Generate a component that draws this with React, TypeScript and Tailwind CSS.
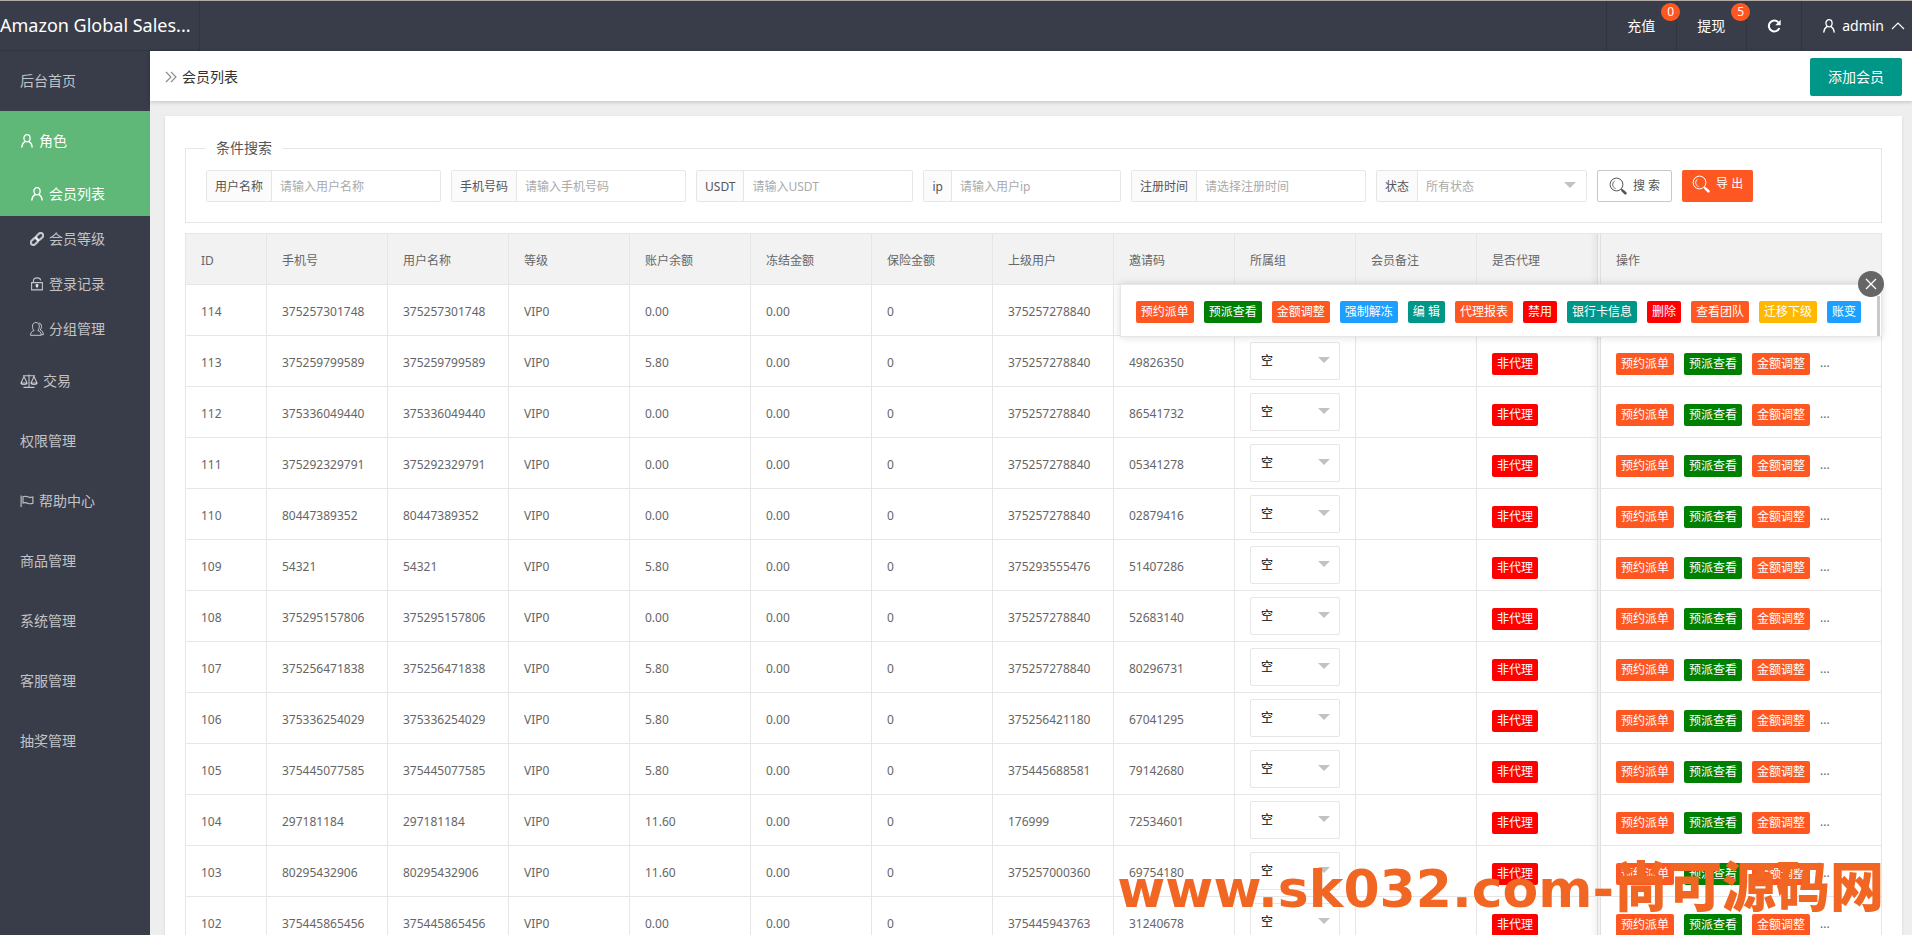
import React from "react";

const FONT = "font-['Noto_Sans','Noto_Sans_CJK_SC',sans-serif]";

function UserIcon({ className = "w-3 h-3.5" }: { className?: string }) {
  return (
    <svg viewBox="0 0 12 14" className={className} fill="none" stroke="currentColor" strokeWidth="1.3" strokeLinecap="round" aria-hidden="true">
      <ellipse cx="6" cy="4.3" rx="3.1" ry="3.6" />
      <path d="M4.2 7.4C2.2 8.6 1 10.6.8 13.1M7.8 7.4c2 1.2 3.2 3.2 3.4 5.7" />
    </svg>
  );
}

function LinkIcon() {
  return (
    <svg viewBox="0 0 14 14" className="h-3.5 w-3.5" fill="none" stroke="currentColor" strokeWidth="2.2" aria-hidden="true">
      <rect x="5.6" y="2" width="8" height="5" rx="2.5" transform="rotate(-45 9.6 4.5)" />
      <rect x=".4" y="7" width="8" height="5" rx="2.5" transform="rotate(-45 4.4 9.5)" />
    </svg>
  );
}

function LockIcon() {
  return (
    <svg viewBox="0 0 14 14" className="h-3.5 w-3.5" fill="none" stroke="currentColor" strokeWidth="1.1" aria-hidden="true">
      <path d="M1.6 5.6h10.8v7.3H1.6zM3.4 5.6V3.9C3.4 2 4.9.9 7 .9s3.6 1.1 3.6 2.6" />
      <circle cx="7" cy="8.4" r="1" fill="currentColor" />
      <path d="M7 8.4v2.8" />
    </svg>
  );
}

function GroupIcon() {
  return (
    <svg viewBox="0 0 14 14" className="h-3.5 w-3.5" fill="none" stroke="currentColor" strokeWidth="1" strokeLinejoin="round" aria-hidden="true">
      <path d="M4 8.600C2.900 7.400 2.500 5.900 2.500 4.300 2.500 2 3.800.5 5.900.5s3.400 1.500 3.400 3.800c0 1.600-.4 3.100-1.500 4.300 2.400.7 3.400 2 3.400 4.700H.6C.6 10.600 1.600 9.300 4 8.600z" />
      <path d="M8.800 1c1.800.2 2.700 1.500 2.700 3.300 0 1.400-.4 2.600-1.200 3.700 2 .8 3 2.200 3.100 4.700h-2" />
    </svg>
  );
}

function ScaleIcon() {
  return (
    <svg viewBox="0 0 18 14" className="h-3.5 w-[18px]" fill="none" stroke="currentColor" strokeWidth="1.1" strokeLinejoin="round" aria-hidden="true">
      <path d="M3 1.800h12M9 .5v12.700M3.500 13.400h11" />
      <path d="M4 2.500 1 9h6zM14 2.500 11 9h6z" />
      <path d="M1 9c.5 2 5.500 2 6 0M11 9c.5 2 5.500 2 6 0" />
    </svg>
  );
}

function FlagIcon() {
  return (
    <svg viewBox="0 0 15 14" className="h-3.5 w-3.5" fill="none" stroke="currentColor" strokeWidth="1.200" aria-hidden="true">
      <path d="M1.200 1v12.500M3.200 2.400c2.200-1 3.600-.6 5 .1s3.400.9 5.600.2v6.700c-2.200.8-4.200.5-5.600-.1s-2.800-.9-5-.1z" />
    </svg>
  );
}

function RefreshIcon() {
  return (
    <svg viewBox="0 0 14 14" className="h-3.5 w-3.5" fill="none" aria-hidden="true">
      <path d="M11.200 3.300A5.400 5.400 0 1 0 12.300 9" stroke="currentColor" strokeWidth="2" />
      <path d="M13.700.8v5.400H8.300z" fill="currentColor" />
    </svg>
  );
}

function SearchIcon() {
  return (
    <svg viewBox="0 0 18 18" className="h-[18px] w-[18px]" fill="none" stroke="currentColor" aria-hidden="true">
      <circle cx="7.500" cy="7.500" r="6.400" strokeWidth="1" />
      <path d="M6.600 11.600C3.400 10.600 2.600 6.200 5.600 4" strokeWidth=".9" />
      <path d="m12.200 12.200 1.200 1.200" strokeWidth="1.200" />
      <path d="m13.600 13.600 2.800 2.700" strokeWidth="2.600" strokeLinecap="round" />
    </svg>
  );
}

type MenuItem = { text: string; icon?: React.ReactNode; sub?: boolean; active?: boolean };

const menu: MenuItem[] = [
  { text: "后台首页" },
  { text: "角色", icon: <UserIcon className="mx-px h-3.5 w-3" />, active: true },
  { text: "会员列表", icon: <UserIcon className="mx-px h-3.5 w-3" />, sub: true, active: true },
  { text: "会员等级", icon: <LinkIcon />, sub: true },
  { text: "登录记录", icon: <LockIcon />, sub: true },
  { text: "分组管理", icon: <GroupIcon />, sub: true },
  { text: "交易", icon: <ScaleIcon /> },
  { text: "权限管理" },
  { text: "帮助中心", icon: <FlagIcon /> },
  { text: "商品管理" },
  { text: "系统管理" },
  { text: "客服管理" },
  { text: "抽奖管理" },
];

const columns = ["ID", "手机号", "用户名称", "等级", "账户余额", "冻结金额", "保险金额", "上级用户", "邀请码", "所属组", "会员备注", "是否代理"];

const rows: string[][] = [
  ["114", "375257301748", "375257301748", "VIP0", "0.00", "0.00", "0", "375257278840", ""],
  ["113", "375259799589", "375259799589", "VIP0", "5.80", "0.00", "0", "375257278840", "49826350"],
  ["112", "375336049440", "375336049440", "VIP0", "0.00", "0.00", "0", "375257278840", "86541732"],
  ["111", "375292329791", "375292329791", "VIP0", "0.00", "0.00", "0", "375257278840", "05341278"],
  ["110", "80447389352", "80447389352", "VIP0", "0.00", "0.00", "0", "375257278840", "02879416"],
  ["109", "54321", "54321", "VIP0", "5.80", "0.00", "0", "375293555476", "51407286"],
  ["108", "375295157806", "375295157806", "VIP0", "0.00", "0.00", "0", "375257278840", "52683140"],
  ["107", "375256471838", "375256471838", "VIP0", "5.80", "0.00", "0", "375257278840", "80296731"],
  ["106", "375336254029", "375336254029", "VIP0", "5.80", "0.00", "0", "375256421180", "67041295"],
  ["105", "375445077585", "375445077585", "VIP0", "5.80", "0.00", "0", "375445688581", "79142680"],
  ["104", "297181184", "297181184", "VIP0", "11.60", "0.00", "0", "176999", "72534601"],
  ["103", "80295432906", "80295432906", "VIP0", "11.60", "0.00", "0", "375257000360", "69754180"],
  ["102", "375445865456", "375445865456", "VIP0", "0.00", "0.00", "0", "375445943763", "31240678"],
];

const expandedId = "114";

const actions: [string, string][] = [
  ["预约派单", "bg-[#ff5722]"],
  ["预派查看", "bg-[#008000]"],
  ["金额调整", "bg-[#ff5722]"],
  ["强制解冻", "bg-[#1e9fff]"],
  ["编 辑", "bg-[#009688]"],
  ["代理报表", "bg-[#ff5722]"],
  ["禁用", "bg-[#ff0000]"],
  ["银行卡信息", "bg-[#009688]"],
  ["删除", "bg-[#ff0000]"],
  ["查看团队", "bg-[#ff5722]"],
  ["迁移下级", "bg-[#ffb800]"],
  ["账变", "bg-[#1e9fff]"],
];

function SmallButton({ text, color }: { text: string; color: string }) {
  return (
    <button type="button" className={`block h-[22px] shrink-0 whitespace-nowrap rounded-xs px-[5px] text-xs leading-[22px] text-white ${color}`}>
      {text}
    </button>
  );
}

function Caret() {
  return <span className="pointer-events-none absolute right-[10px] top-1/2 -mt-1 border-x-6 border-t-6 border-x-transparent border-t-[#c2c2c2]" />;
}

function Field({ id, label, placeholder }: { id: string; label: string; placeholder: string }) {
  return (
    <div className="flex h-8 rounded-xs border border-[#e6e6e6]">
      <label htmlFor={id} className="border-r border-[#e6e6e6] bg-[#fbfbfb] px-2 leading-8 text-[#555]">
        {label}
      </label>
      <input id={id} type="text" placeholder={placeholder} className="w-[168px] px-2 pt-0.5 text-[#555] outline-none placeholder:text-[#aaa]" />
    </div>
  );
}

function SearchForm() {
  return (
    <fieldset className="border border-[#e6e6e6] px-5 pb-5">
      <legend className="px-[10px] text-sm leading-5 text-[#555]">条件搜索</legend>
      <form className="flex flex-wrap gap-[10px] pt-3 text-xs">
        <Field id="username" label="用户名称" placeholder="请输入用户名称" />
        <Field id="tel" label="手机号码" placeholder="请输入手机号码" />
        <Field id="usdt" label="USDT" placeholder="请输入USDT" />
        <Field id="ip" label="ip" placeholder="请输入用户ip" />
        <Field id="regtime" label="注册时间" placeholder="请选择注册时间" />
        <div className="flex h-8 rounded-xs border border-[#e6e6e6]">
          <label htmlFor="status" className="border-r border-[#e6e6e6] bg-[#fbfbfb] px-2 leading-8 text-[#555]">
            状态
          </label>
          <div className="relative">
            <select id="status" className="h-full w-[168px] appearance-none px-2 pt-0.5 text-[#aaa] outline-none">
              <option>所有状态</option>
            </select>
            <Caret />
          </div>
        </div>
        <button type="button" className="flex h-8 items-center gap-[6px] rounded-xs border border-[#c9c9c9] bg-white px-[11px] text-[#555]">
          <SearchIcon />
          搜 索
        </button>
        <button type="button" className="flex h-8 items-center gap-[6px] rounded-xs bg-[#ff5722] px-[10px] pb-1 text-white">
          <SearchIcon />
          导 出
        </button>
      </form>
    </fieldset>
  );
}

const cell = "border-b border-r border-[#e6e6e6] px-[15px] text-left font-normal";
const pinned =
  "relative border-b border-r border-[#e6e6e6] pl-[18px] pr-[15px] text-left font-normal shadow-[inset_2px_0_#f2f2f2,inset_3px_0_#e0e0e0] before:absolute before:inset-y-0 before:-left-2 before:w-2 before:bg-linear-to-r before:from-transparent before:to-black/5";

function RowTail() {
  return (
    <>
      <td className={cell}>
        <div className="relative h-[38px] w-[90px]">
          <select aria-label="所属组" className="h-full w-full appearance-none rounded-xs border border-[#e6e6e6] bg-white px-[10px] text-black outline-none">
            <option>空</option>
          </select>
          <Caret />
        </div>
      </td>
      <td className={cell} />
      <td className={`${cell} pt-[5px]`}>
        <SmallButton text="非代理" color="bg-[#ff0000]" />
      </td>
      <td className={`${pinned} pt-[5px]`}>
        <div className="flex gap-[10px]">
          {actions.slice(0, 3).map(([t, c]) => (
            <SmallButton key={t} text={t} color={c} />
          ))}
          <span className="leading-5">...</span>
        </div>
      </td>
    </>
  );
}

function MemberTable() {
  return (
    <div className="relative mt-[10px]">
      <table className="w-full table-fixed border-separate border-spacing-0 border-l border-t border-[#e6e6e6] text-xs text-[#666]">
        <colgroup>
          <col className="w-[81px]" />
          {columns.slice(1).map((c) => (
            <col key={c} className="w-[121px]" />
          ))}
          <col />
        </colgroup>
        <thead>
          <tr className="h-[51px] bg-[#f2f2f2]">
            {columns.map((c) => (
              <th key={c} className={`${cell} pt-[3px]`}>
                {c}
              </th>
            ))}
            <th className={`${pinned} pt-[3px]`}>操作</th>
          </tr>
        </thead>
        <tbody>
          {rows.map((r) => (
            <tr key={r[0]} className="h-[51px]">
              {r.map((v, i) => (
                <td key={i} className={`${cell} pt-[3px]`}>
                  {v}
                </td>
              ))}
              {r[0] === expandedId ? <td colSpan={4} className={cell} /> : <RowTail />}
            </tr>
          ))}
        </tbody>
      </table>
      <div className="absolute right-0 top-[51px] flex h-[53px] gap-[10px] border border-[#e6e6e6] bg-white pl-[15px] pr-5 pt-4 shadow-[0_0_8px_rgba(0,0,0,0.15)]">
        {actions.map(([t, c]) => (
          <SmallButton key={t} text={t} color={c} />
        ))}
        <span className="absolute bottom-0 right-px h-10 w-[3px] bg-[#c9c9c9]" />
        <button type="button" aria-label="关闭" className="absolute -right-[3px] -top-[14px] flex h-[26px] w-[26px] items-center justify-center rounded-full bg-[#666] text-white">
          <svg viewBox="0 0 12 12" className="h-3 w-3" stroke="currentColor" strokeWidth="1.300" aria-hidden="true">
            <path d="m1 1 10 10M11 1 1 11" />
          </svg>
        </button>
      </div>
    </div>
  );
}

function HeaderLink({ text, count }: { text: string; count: number }) {
  return (
    <a href="#" className="relative flex items-center border-l border-[#31353f] pl-5 pr-[21px]">
      {text}
      <span className="absolute -right-1 top-[2px] z-10 h-[18px] rounded-full bg-[#ff5722] px-[6px] text-xs leading-[18px]">{count}</span>
    </a>
  );
}

export default function App() {
  return (
    <div className={`relative flex h-screen flex-col overflow-hidden bg-[#eee] text-sm ${FONT}`}>
      <header className="flex h-[51px] shrink-0 justify-between border-t border-[#b5aba6] bg-[#393d49] text-white">
        <div className="w-[200px] overflow-hidden text-ellipsis whitespace-nowrap border-b border-r border-[#31353f] text-lg leading-[49px]">
          Amazon Global Sales...
        </div>
        <nav className="flex">
          <HeaderLink text="充值" count={0} />
          <HeaderLink text="提现" count={5} />
          <a href="#" aria-label="刷新" className="flex items-center border-l border-[#31353f] px-5">
            <RefreshIcon />
          </a>
          <a href="#" className="flex items-center gap-[7px] border-l border-[#31353f] pl-[21px] pr-[7px]">
            <UserIcon />
            admin
            <svg viewBox="0 0 14 14" className="h-3.5 w-3.5" fill="none" stroke="currentColor" strokeWidth="1.200" aria-hidden="true">
              <path d="m1 10 6-6 6 6" />
            </svg>
          </a>
        </nav>
      </header>
      <div className="flex min-h-0 flex-1">
        <aside className="w-[150px] shrink-0 bg-[#393d49]">
          <nav className="flex flex-col">
            {menu.map((m) => (
              <a
                key={m.text}
                href="#"
                className={`flex items-center gap-[5px] ${m.sub ? "h-[45px] pl-[30px]" : "h-[60px] pl-5"} ${
                  m.active ? "bg-[#5fb878] text-white" : "text-white/70"
                }`}
              >
                {m.icon}
                {m.text}
              </a>
            ))}
          </nav>
        </aside>
        <main className="flex min-w-0 flex-1 flex-col">
          <div className="z-10 flex h-[50px] shrink-0 items-center justify-between bg-white pl-[15px] pr-[10px] pt-px shadow-[0_1px_4px_rgba(0,0,0,0.2)]">
            <h1 className="flex items-center gap-[5px] text-[#333]">
              <svg viewBox="0 0 12 12" className="h-3 w-3 text-[#888]" fill="none" stroke="currentColor" strokeWidth="1.100" aria-hidden="true">
                <path d="m1 1 5 5-5 5M6 1l5 5-5 5" />
              </svg>
              会员列表
            </h1>
            <button type="button" className="h-[38px] rounded-xs bg-[#009688] px-[18px] text-white">
              添加会员
            </button>
          </div>
          <section className="ml-[15px] mr-[10px] mt-[15px] flex-1 bg-white px-5 pt-[22px] shadow-[0_1px_3px_rgba(0,0,0,0.1)]">
            <SearchForm />
            <MemberTable />
          </section>
        </main>
      </div>
      <div className="pointer-events-none absolute bottom-5 right-7 z-20 flex items-baseline whitespace-nowrap leading-none text-[#f16622]">
        <span className="font-['DejaVu_Sans',sans-serif] text-[52px] font-bold">www.sk032.com-</span>
        <span className="font-['Noto_Sans_CJK_SC',sans-serif] text-[54px] font-black leading-none">尚可源码网</span>
      </div>
    </div>
  );
}
